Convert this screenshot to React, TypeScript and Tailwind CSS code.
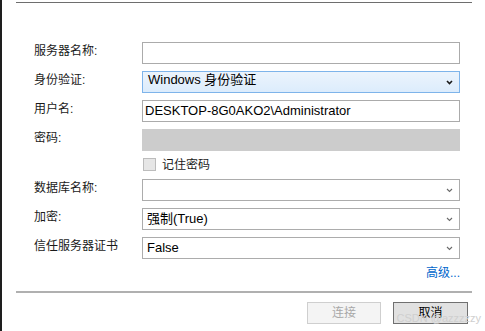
import React from 'react';

const font = { fontFamily: '"Liberation Sans", "Noto Sans CJK SC", sans-serif' };

function Chevron({ dark }: { dark?: boolean }) {
  return (
    <svg width="7" height="5" viewBox="0 0 7 5" className="shrink-0">
      <polyline
        points="1,1 3.5,3.5 6,1"
        fill="none"
        stroke={dark ? '#1a1a1a' : '#6a6a6a'}
        strokeWidth={dark ? 1.6 : 1.1}
      />
    </svg>
  );
}

function Row({ label, children, h = 'h-[29px]' }: { label?: string; children: React.ReactNode; h?: string }) {
  return (
    <div className={`flex ${h}`}>
      <div className="w-[108px] pt-[1px] text-[12px] leading-[16px] text-[#1a1a1a]">{label}</div>
      <div className="w-[318px]">{children}</div>
    </div>
  );
}

function TextBox({ value }: { value?: string }) {
  return (
    <div className="h-[22px] border border-[#ababab] bg-white px-[2px] flex items-center text-[13px] text-black">
      {value}
    </div>
  );
}

function Select({ value, focused }: { value?: string; focused?: boolean }) {
  return (
    <div
      className={
        focused
          ? 'h-[22px] border border-[#7eb4ea] bg-gradient-to-b from-[#ecf4fc] to-[#dcecfc] pl-[5px] pr-[6px] flex items-center justify-between text-[13px] text-black'
          : 'h-[22px] border border-[#acacac] bg-white pl-[4px] pr-[6px] flex items-center justify-between text-[13px] text-black'
      }
    >
      <span className={focused ? '-mt-[5px]' : ''}>{value}</span>
      <Chevron dark={focused} />
    </div>
  );
}

export default function App() {
  return (
    <div className="w-[485px] h-[331px] bg-white flex overflow-hidden relative" style={font}>
      {/* window edge */}
      <div className="w-[2px] bg-[#1e1e1e]" />

      <div className="flex-1 flex flex-col">
        <div className="mt-[2px] ml-[14px] w-[456px] h-px bg-[#6e6e6e]" />

        <div className="mt-[39px] ml-[32px] flex flex-col">
          <Row label="服务器名称:">
            <TextBox />
          </Row>
          <Row label="身份验证:">
            <Select value="Windows 身份验证" focused />
          </Row>
          <Row label="用户名:">
            <TextBox value="DESKTOP-8G0AKO2\Administrator" />
          </Row>
          <Row label="密码:">
            <div className="h-[22px] bg-[#cccccc]" />
          </Row>
          <Row h="h-[21px]">
            <div className="flex items-center ml-[1px] gap-[6px] h-[13px]">
              <div className="w-[13px] h-[13px] border border-[#bcbcbc] bg-[#e6e6e6]" />
              <span className="text-[12px] leading-[14px] text-[#1a1a1a]">记住密码</span>
            </div>
          </Row>
          <Row label="数据库名称:">
            <Select />
          </Row>
          <Row label="加密:">
            <Select value="强制(True)" />
          </Row>
          <Row label="信任服务器证书">
            <Select value="False" />
          </Row>

          <div className="w-[426px] flex justify-end">
            <span className="text-[12px] leading-[14px] text-[#0066cc]">高级...</span>
          </div>
        </div>

        <div className="mt-[11px] ml-[14px] w-[456px] h-[2px] bg-[#b0b0b0]" />

        <div className="mt-[9px] ml-[305px] flex gap-[12px]">
          <button className="w-[74px] h-[22px] border border-[#cfcfcf] bg-[#f4f4f4] text-[12px] text-[#a8a8a8]">
            连接
          </button>
          <button className="w-[75px] h-[22px] border border-[#707070] bg-[#e1e1e1] text-[12px] text-black">
            取消
          </button>
        </div>
      </div>

      {/* watermark */}
      <div className="absolute right-[4px] bottom-[7px] text-[11px] text-[#cfcfcf] leading-none">
        CSDN @azzzzzy
      </div>
    </div>
  );
}
